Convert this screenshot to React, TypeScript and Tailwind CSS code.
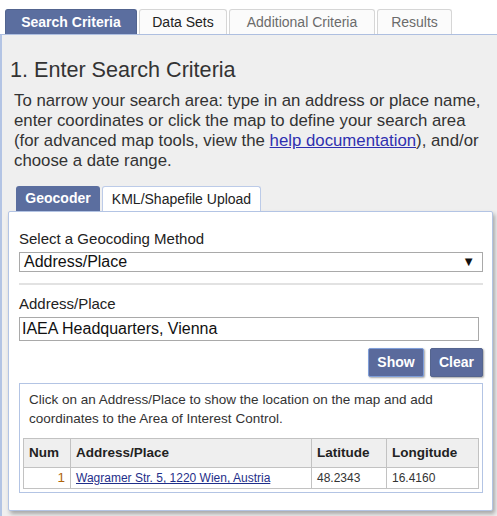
import React from "react";

export default function App() {
  return (
    <div className="w-[497px] h-[516px] overflow-hidden bg-white text-[#222]" style={{ fontFamily: '"Liberation Sans", Arial, sans-serif' }}>
      <div className="flex gap-[2px] pl-[5px] pt-[9px] border-b border-[#aebfe0]">
        <div className="w-[132px] h-[25px] flex items-center justify-center bg-[#5b6e9f] border border-[#52648f] border-b-0 rounded-t-[3px] text-white text-[14px] font-bold">Search Criteria</div>
        <div className="w-[88px] h-[25px] flex items-center justify-center bg-[#fbfbfb] border border-[#d6d6d6] border-b-0 rounded-t-[3px] text-[14px] text-[#222]">Data Sets</div>
        <div className="w-[146px] h-[25px] flex items-center justify-center bg-[#fbfbfb] border border-[#d6d6d6] border-b-0 rounded-t-[3px] text-[14px] text-[#6b6b6b]">Additional Criteria</div>
        <div className="w-[75px] h-[25px] flex items-center justify-center bg-[#fbfbfb] border border-[#d6d6d6] border-b-0 rounded-t-[3px] text-[14px] text-[#6b6b6b]">Results</div>
      </div>
      <div className="bg-[#efefef] border-l-2 border-[#b3c4e4] h-[482px] pl-[8px] pr-[4px]">
        <h1 className="pt-[22px] text-[21.6px] leading-[26px] text-[#333]">1. Enter Search Criteria</h1>
        <p className="mt-[8px] pl-[4px] pr-[10px] text-[16.8px] leading-[20px] text-[#333]">
          To narrow your search area: type in an address or place name, enter coordinates or click the map to define your search area (for advanced map tools, view the <span className="text-[#2f2fb0] underline">help documentation</span>), and/or choose a date range.
        </p>
        <div className="mt-[15px] flex gap-[2px] pl-[6px]">
          <div className="w-[84px] h-[25px] flex items-center justify-center bg-[#5b6e9f] rounded-t-[3px] text-white text-[14px] font-bold">Geocoder</div>
          <div className="w-[159px] h-[25px] flex items-center justify-center bg-white border border-[#bccbe8] border-b-0 rounded-t-[3px] text-[14px] text-[#222]">KML/Shapefile Upload</div>
        </div>
        <div className="w-[485px] h-[300px] -ml-[2px] bg-white border border-[#b3c4e4] rounded-[2px] shadow-[2px_3px_4px_rgba(0,0,0,0.3)] pl-[10px] pr-[9px]">
          <div className="pt-[18px] text-[15px] leading-[18px] text-[#222]">Select a Geocoding Method</div>
          <div className="mt-[4px] h-[20px] border border-[#a9a9a9] flex items-center justify-between pl-[4px] pr-[7px] text-[16px] text-[#111]">
            <span>Address/Place</span>
            <span className="text-[13px]">▼</span>
          </div>
          <div className="mt-[11px] h-[2px] bg-[#e2e2e2]" />
          <div className="mt-[10px] text-[15px] leading-[18px] text-[#222]">Address/Place</div>
          <div className="mt-[4px] mr-[4px] h-[24px] border border-[#a9a9a9] flex items-center pl-[2px] text-[16px] text-[#111]">IAEA Headquarters, Vienna</div>
          <div className="mt-[7px] flex justify-end gap-[6px]">
            <div className="w-[56px] h-[29px] flex items-center justify-center bg-[#5a6a9c] border border-[#7f9ed8] rounded-[2px] shadow-[1px_1px_2px_rgba(0,0,0,0.35)] text-white text-[14px] font-bold">Show</div>
            <div className="w-[53px] h-[29px] flex items-center justify-center bg-[#5a6a9c] border border-[#55658f] rounded-[2px] shadow-[1px_1px_2px_rgba(0,0,0,0.35)] text-white text-[14px] font-bold">Clear</div>
          </div>
          <div className="mt-[6px] border border-[#b3c4e4] px-[3px] pb-[3px]">
            <div className="pt-[6px] pl-[6px] text-[13.5px] leading-[19px] text-[#333]">
              Click on an Address/Place to show the location on the map and add coordinates to the Area of Interest Control.
            </div>
            <table className="mt-[10px] w-[456px] border-collapse text-[13.5px]">
              <thead>
                <tr className="bg-[#efefef] h-[29px]">
                  <th className="w-[47px] border border-[#c2c2c2] text-left pl-[5px] font-bold text-[#222]">Num</th>
                  <th className="w-[241px] border border-[#c2c2c2] text-left pl-[5px] font-bold text-[#222]">Address/Place</th>
                  <th className="w-[75px] border border-[#c2c2c2] text-left pl-[5px] font-bold text-[#222]">Latitude</th>
                  <th className="border border-[#c2c2c2] text-left pl-[5px] font-bold text-[#222]">Longitude</th>
                </tr>
              </thead>
              <tbody>
                <tr className="h-[21px] bg-white">
                  <td className="border border-[#c2c2c2] text-right pr-[5px] text-[#b0650a]">1</td>
                  <td className="border border-[#c2c2c2] pl-[5px] text-[12px]"><span className="text-[#1f2f8a] underline">Wagramer Str. 5, 1220 Wien, Austria</span></td>
                  <td className="border border-[#c2c2c2] pl-[5px] text-[12px] text-[#333]">48.2343</td>
                  <td className="border border-[#c2c2c2] pl-[5px] text-[12px] text-[#333]">16.4160</td>
                </tr>
              </tbody>
            </table>
          </div>
        </div>
      </div>
    </div>
  );
}
